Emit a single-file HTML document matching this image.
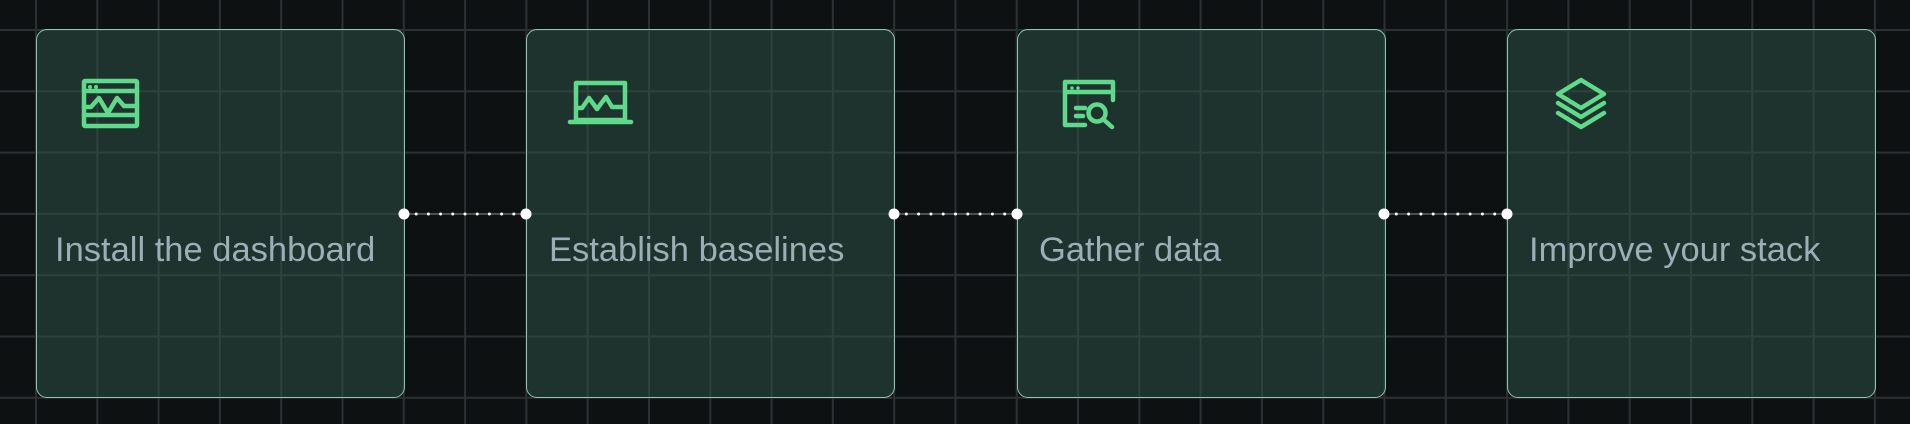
<!DOCTYPE html>
<html><head><meta charset="utf-8"><style>
html,body{margin:0;padding:0;width:1910px;height:424px;overflow:hidden;background:#0d1112;}
.bg{position:absolute;left:0;top:0;width:1910px;height:424px;
background-image:linear-gradient(to right,#2b3133 2px,transparent 2px),linear-gradient(to bottom,#2b3133 2px,transparent 2px);
background-size:61.3px 61.3px;background-position:35px 29px;}
.card{position:absolute;top:29px;width:369px;height:369px;border:1.5px solid #8cc7ad;border-radius:11px;
background:rgba(45,80,70,0.55);box-sizing:border-box;}
.t{position:absolute;top:231px;font-family:"Liberation Sans",Arial,sans-serif;font-size:34.5px;color:#9aafb6;white-space:nowrap;}
svg{position:absolute;left:0;top:0;}
</style></head><body>
<div class="bg"></div>
<div class="card" style="left:36px"></div>
<div class="card" style="left:526px"></div>
<div class="card" style="left:1017px"></div>
<div class="card" style="left:1507px"></div>
<div class="t" style="left:55px">Install the dashboard</div>
<div class="t" style="left:549px">Establish baselines</div>
<div class="t" style="left:1039px">Gather data</div>
<div class="t" style="left:1529px">Improve your stack</div>
<svg width="1910" height="424" viewBox="0 0 1910 424">
<g fill="none" stroke="#5fd98a" stroke-width="4.5" stroke-linejoin="round" stroke-linecap="round">
<!-- icon1 -->
<rect x="84" y="81" width="53" height="45" rx="1"/>
<line x1="84" y1="91" x2="137" y2="91"/>
<line x1="84" y1="115" x2="137" y2="115"/>
<polyline points="84,107 91,107 99,98 108,113 117,98 124,106 137,106"/>
<!-- icon2 -->
<rect x="576" y="83" width="49" height="37"/>
<line x1="570" y1="122" x2="631" y2="122"/>
<polyline points="576,108 582,108 589,98 597,109 606,97 612,107 625,107"/>
<!-- icon3 -->
<polyline points="1085,125 1065,125 1065,82 1113,82 1113,100"/>
<line x1="1065" y1="92" x2="1113" y2="92"/>
<line x1="1076" y1="108" x2="1085" y2="108"/>
<line x1="1076" y1="116" x2="1083" y2="116"/>
<circle cx="1097" cy="113" r="8.5"/>
<line x1="1103" y1="119" x2="1112" y2="127"/>
<!-- icon4 -->
<polygon points="1581,80 1604,94 1581,108 1558,94"/>
<polyline points="1558,103 1581,117 1604,103"/>
<polyline points="1558,113 1581,127 1604,113"/>
</g>
<g fill="#5fd98a">
<circle cx="90" cy="87" r="2"/><circle cx="96" cy="87" r="2"/>
<circle cx="1072" cy="88" r="1.8"/><circle cx="1078" cy="88" r="1.8"/>
</g>
<g>
<line x1="404" y1="214" x2="526" y2="214" stroke="#6c7472" stroke-width="1"/>
<line x1="894" y1="214" x2="1017" y2="214" stroke="#6c7472" stroke-width="1"/>
<line x1="1384" y1="214" x2="1507" y2="214" stroke="#6c7472" stroke-width="1"/>
<line x1="404" y1="214" x2="526" y2="214" stroke="#fff" stroke-width="3" stroke-dasharray="0 12.2" stroke-linecap="round"/>
<line x1="894" y1="214" x2="1017" y2="214" stroke="#fff" stroke-width="3" stroke-dasharray="0 12.3" stroke-linecap="round"/>
<line x1="1384" y1="214" x2="1507" y2="214" stroke="#fff" stroke-width="3" stroke-dasharray="0 12.3" stroke-linecap="round"/>
<g fill="#fff">
<circle cx="404" cy="214" r="5.5"/><circle cx="526" cy="214" r="5.5"/>
<circle cx="894" cy="214" r="5.5"/><circle cx="1017" cy="214" r="5.5"/>
<circle cx="1384" cy="214" r="5.5"/><circle cx="1507" cy="214" r="5.5"/>
</g>
</g>
</svg>
</body></html>
